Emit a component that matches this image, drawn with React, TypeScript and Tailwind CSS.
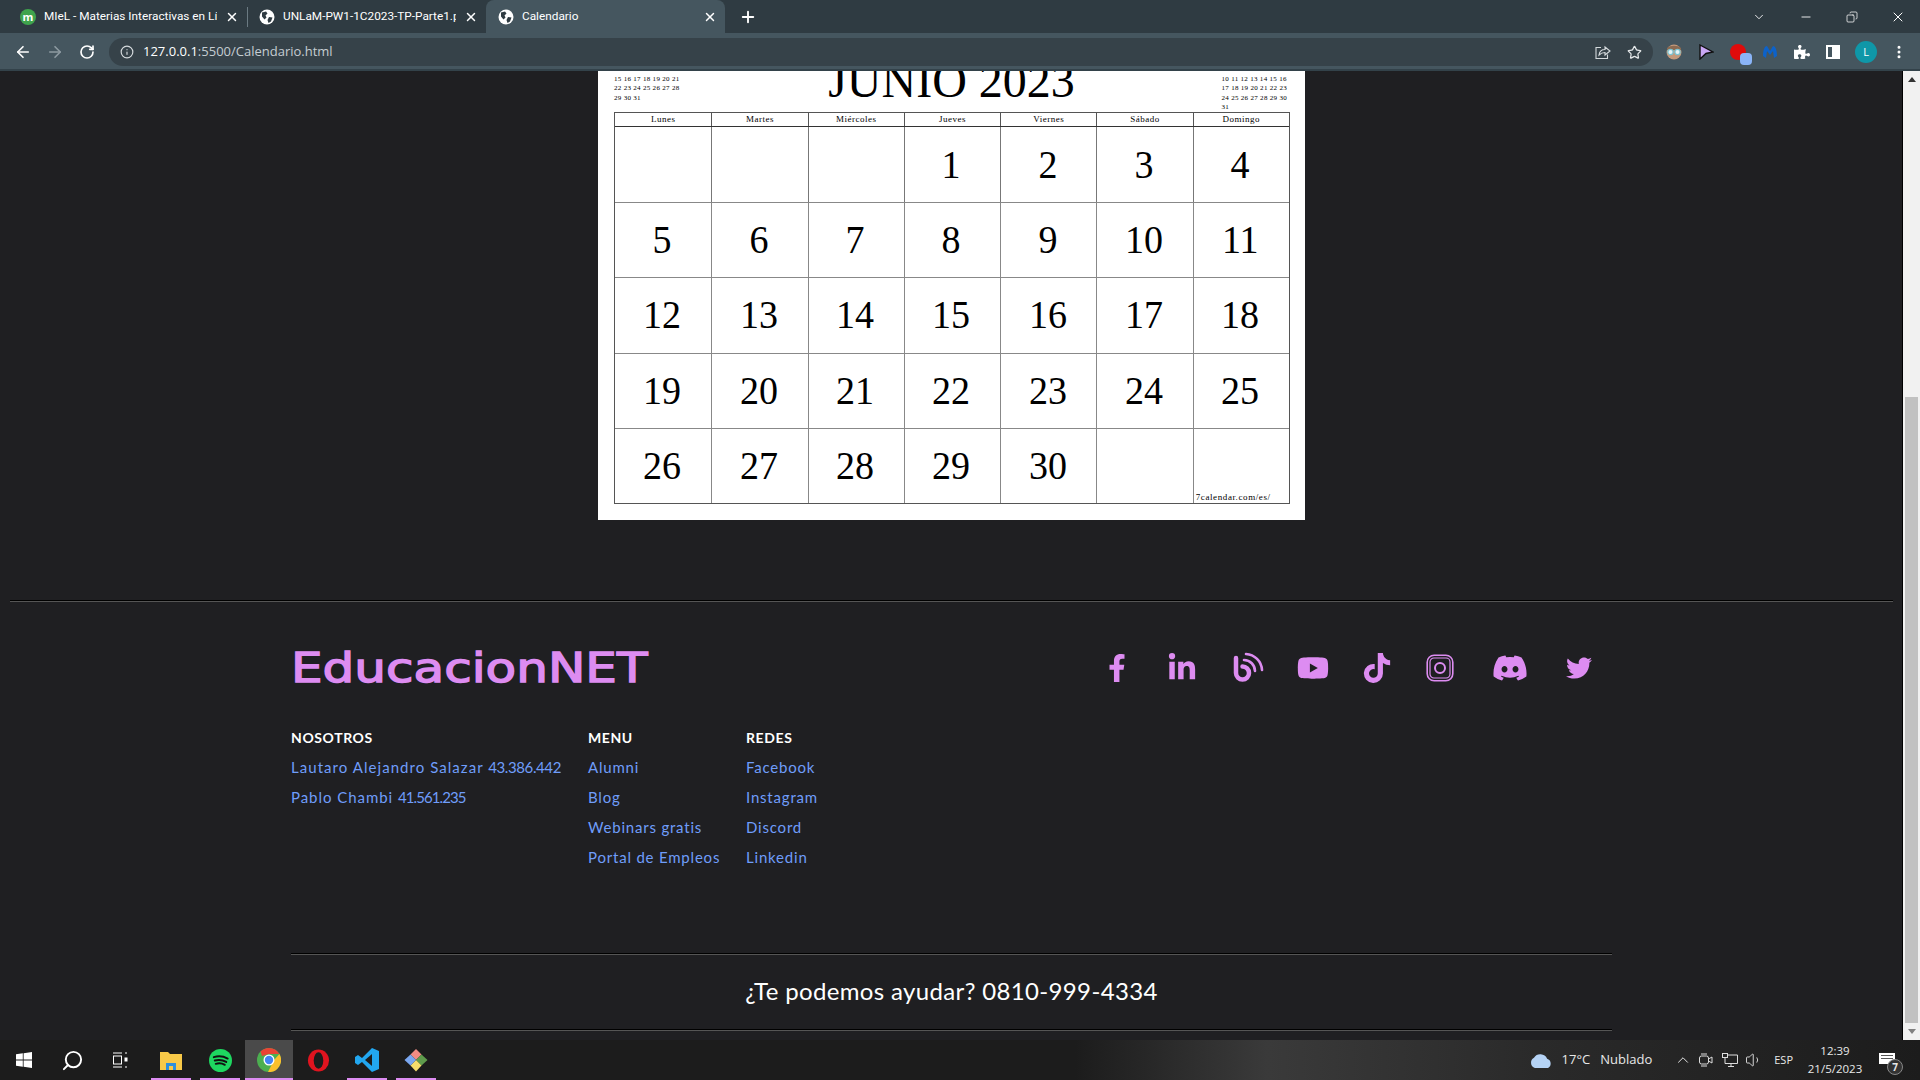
import { useMemo, type ReactNode } from 'react';
import { ArrowLeft, ArrowRight, ChevronDown, ChevronUp, Copy, Info, Minus, MoreVertical, Plus, RotateCw, Search, Star, Volume1, X } from 'lucide-react';
import { FaDiscord, FaFacebookF, FaLinkedinIn, FaPuzzlePiece, FaTiktok, FaTwitter, FaYoutube } from 'react-icons/fa';

function Globe() {
  return (
    <svg viewBox="0 0 16 16" className="w-4 h-4 shrink-0">
      <circle cx="8" cy="8" r="7.5" fill="#fff" />
      <path d="M3 3.5 L7 2.5 L8.5 4.5 L6.5 6.5 L7.5 8.5 L5.5 10.5 L3 7.5 Z M10 8 L13.5 8.5 L12 12.5 L9.5 14 L8.5 11 Z" fill="#2f3b42" />
    </svg>
  );
}

function Tab({ icon, title, active, className }: { icon: ReactNode; title: string; active?: boolean; className: string }) {
  return (
    <div className={`relative h-full flex items-center pr-[8px] gap-[8px] ${className} ${active ? 'bg-[#45565f] rounded-t-lg' : ''}`}>
      {icon}
      <span className="flex-1 whitespace-nowrap overflow-hidden font-['Roboto',sans-serif] text-[11.8px] text-white">{title}</span>
      <X className="w-3.5 h-3.5 text-white shrink-0" strokeWidth={2.5} />
    </div>
  );
}

function ChromeBar() {
  return (
    <div className="shrink-0 font-['Open_Sans',sans-serif]">
      <div className="h-[33px] bg-[#2f3b42] flex items-end">
        <div className="flex h-[33px] items-center">
          <Tab
            className="w-[247px] pl-[20px]"
            title="MIeL - Materias Interactivas en Lí"
            icon={
              <span className="w-4 h-4 rounded-full bg-[#3fa34d] text-white text-[11px] font-bold leading-4 text-center shrink-0">m</span>
            }
          />
          <div className="w-px h-5 bg-[#6b7a82]" />
          <Tab className="w-[238px] pl-[11px]" title="UNLaM-PW1-1C2023-TP-Parte1.p" icon={<Globe />} />
          <Tab className="w-[239px] pl-[12px]" title="Calendario" icon={<Globe />} active />
          <Plus className="w-[18px] h-[18px] text-white ml-[14px]" strokeWidth={2.5} />
        </div>
        <div className="flex-1" />
        <div className="flex items-center h-full text-white pr-[14px]">
          <ChevronDown className="w-[14px] h-[14px]" strokeWidth={1.5} />
          <Minus className="w-[14px] h-[14px] ml-[33px]" strokeWidth={1.5} />
          <Copy className="w-[12px] h-[12px] ml-[33px] -scale-x-100" strokeWidth={1.5} />
          <X className="w-[16px] h-[16px] ml-[32px]" strokeWidth={1.5} />
        </div>
      </div>
      <div className="h-[38px] pt-[2px] bg-[#45565f] border-b-2 border-[#33424a] flex items-center pl-[14px]">
        <ArrowLeft className="w-[18px] h-[18px] text-white" strokeWidth={2.2} />
        <ArrowRight className="w-[18px] h-[18px] text-[#8d9aa1] ml-[14px]" strokeWidth={2.2} />
        <RotateCw className="w-[16px] h-[16px] text-white ml-[15px]" strokeWidth={2.5} />
        <div className="ml-[14px] w-[1544px] h-[28px] rounded-full bg-[#364249] flex items-center pl-[11px] pr-[10px]">
          <Info className="w-[14px] h-[14px] text-[#d5dadd]" />
          <span className="ml-[9px] text-[13px] text-[#c5cdd2]"><span className="text-white">127.0.0.1</span>:5500/Calendario.html</span>
          <div className="flex-1" />
          <svg viewBox="0 0 16 16" className="w-[16px] h-[16px]" fill="none" stroke="#d5dadd" strokeWidth="1.1">
            <path d="M6 3.5 H1 V14.5 H12.5 V10.5" />
            <path d="M4 11 C4.5 7.5 7 5.5 10 5.5 V3 L15 7 L10 11 V8.5 C7.5 8.5 5.5 9.5 4 11 Z" />
          </svg>
          <Star className="w-[15px] h-[15px] text-[#e5e8ea] ml-[16px] mr-[1px]" />
        </div>
        <div className="flex items-center gap-[16px] ml-[13px]">
          <svg viewBox="0 0 16 16" className="w-4 h-4">
            <circle cx="8" cy="8" r="7.5" fill="#c49a7c" />
            <path d="M1 4 C4 1 12 1 15 4 L15 6 H1 Z" fill="#8a6a52" />
            <circle cx="4.5" cy="8" r="2.6" fill="#e8f4f6" stroke="#7cc4d2" strokeWidth="1.2" />
            <circle cx="11.5" cy="8" r="2.6" fill="#e8f4f6" stroke="#7cc4d2" strokeWidth="1.2" />
          </svg>
          <svg viewBox="0 0 16 16" className="w-4 h-4"><path d="M2 1 L15 8 L8 9.5 L2 15 Z" fill="#c9a8f5" stroke="#111" strokeWidth="1.4" /></svg>
          <span className="relative w-4 h-4 rounded-full bg-[#e00b0b]">
            <span className="absolute left-[10px] top-[9px] w-[12px] h-[12px] rounded-sm bg-[#8ab4f8]" />
          </span>
          <svg viewBox="0 0 16 16" className="w-4 h-4"><path d="M1 12 C1 5 3 2 5 2 L8 7 L11 2 C13 2 15 5 15 12 L12 14 L11 7 L8 11 L5 7 L4 14 Z" fill="#0d62c9" /></svg>
          <FaPuzzlePiece className="w-4 h-4 text-white" />
          <div className="w-[14px] h-[14px] border-2 border-white flex justify-end"><div className="w-[6px] h-full bg-white" /></div>
          <span className="w-[22px] h-[22px] -ml-[1px] -mr-[2px] rounded-full bg-[#0f97a8] text-white text-[11px] text-center leading-[22px]">L</span>
          <MoreVertical className="w-4 h-4 text-white" strokeWidth={2.5} />
        </div>
      </div>
    </div>
  );
}

const WEEKDAYS = ['Lunes', 'Martes', 'Miércoles', 'Jueves', 'Viernes', 'Sábado', 'Domingo'];

function MiniMonth({ rows, className }: { rows: string[]; className: string }) {
  return (
    <div className={`text-[7px] leading-[9.5px] tracking-[0.3px] text-black whitespace-pre -mt-[6px] ${className}`}>
      {rows.map((r) => (
        <div key={r}>{r}</div>
      ))}
    </div>
  );
}

function Calendar() {
  const cells = useMemo(() => {
    const out: (number | null)[] = [null, null, null];
    for (let d = 1; d <= 30; d++) out.push(d);
    out.push(null, null);
    return out;
  }, []);

  return (
    <div className="w-[707px] h-[449px] bg-white shrink-0 mx-auto px-[16px] font-['Liberation_Serif',serif] text-black overflow-hidden">
      <div className="h-[41px] grid grid-cols-[1fr_auto_1fr]">
        <MiniMonth className="justify-self-start" rows={['8 9 10 11 12 13 14', '15 16 17 18 19 20 21', '22 23 24 25 26 27 28', '29 30 31']} />
        <div className="text-[48px] leading-[48px] -mt-[14px] whitespace-nowrap">JUNIO 2023</div>
        <MiniMonth className="justify-self-end pr-[2px]" rows={['3 4 5 6 7 8 9', '10 11 12 13 14 15 16', '17 18 19 20 21 22 23', '24 25 26 27 28 29 30', '31']} />
      </div>
      <div className="w-[676px] border border-[#555]">
        <div className="grid grid-cols-7 h-[14px] border-b border-[#333]">
          {WEEKDAYS.map((d, i) => (
            <div key={d} className={`text-[9px] leading-[13px] text-center tracking-[0.5px] ${i > 0 ? 'border-l border-[#555]' : ''}`}>{d}</div>
          ))}
        </div>
        <div className="grid grid-cols-7 auto-rows-[75.2px]">
          {cells.map((c, i) => (
            <div
              key={i}
              className={`relative flex items-center justify-center pr-[2px] text-[40px] ${i % 7 ? 'border-l border-[#777]' : ''} ${i > 6 ? 'border-t border-[#888]' : ''}`}
            >
              <span className="inline-block scale-x-95">{c}</span>
              {i === 34 && <span className="absolute left-[2px] bottom-0 text-[9px] tracking-[0.6px] leading-[12px]">7calendar.com/es/</span>}
            </div>
          ))}
        </div>
      </div>
    </div>
  );
}

function Socials() {
  return (
    <div className="flex items-center text-[#dd8cf1]">
      <FaFacebookF className="w-[28px] h-[28px]" />
      <FaLinkedinIn className="w-[30px] h-[30px] ml-[36px]" />
      <svg viewBox="0 0 32 32" className="w-[32px] h-[32px] ml-[35px]" fill="none" stroke="currentColor" strokeLinecap="round">
        <path d="M4 6 V21 A6.5 6.5 0 1 0 10.5 14.5" strokeWidth="4.5" />
        <path d="M12 8 A11 11 0 0 1 23 19" strokeWidth="2.6" />
        <path d="M14 2 A17 17 0 0 1 30 18" strokeWidth="2.6" />
      </svg>
      <FaYoutube className="w-[32px] h-[32px] ml-[33px]" />
      <FaTiktok className="w-[30px] h-[30px] ml-[33px]" />
      <svg viewBox="0 0 28 28" className="w-[28px] h-[28px] ml-[34px]" fill="none" stroke="currentColor">
        <rect x="1.2" y="1.2" width="25.6" height="25.6" rx="7" strokeWidth="1.6" />
        <rect x="4" y="4" width="20" height="20" rx="4" strokeWidth="1.2" />
        <circle cx="14" cy="14" r="5" strokeWidth="2" />
      </svg>
      <FaDiscord className="w-[36px] h-[36px] ml-[38px]" />
      <FaTwitter className="w-[26px] h-[26px] ml-[38px] mr-[1px]" />
    </div>
  );
}

function LinkColumn({ title, links, className }: { title: string; links: ReactNode[]; className: string }) {
  return (
    <div className={className}>
      <h4 className="text-[14px] leading-[30px] tracking-[0.6px] font-bold text-white">{title}</h4>
      <ul className="-mt-[1px]">
        {links.map((l, i) => (
          <li key={i} className="text-[15px] leading-[30px] text-[#6f9dfa] whitespace-nowrap tracking-[0.8px]">{l}</li>
        ))}
      </ul>
    </div>
  );
}

const DIVIDER = 'border-[#555] shadow-[0_-1px_0_#000]';

function Footer() {
  return (
    <footer className={`mt-[81px] mx-[10px] border-t ${DIVIDER} font-['Lato',sans-serif]`}>
      <div className="w-[1321px] mx-auto">
        <div className="flex items-center justify-between pt-[11px] h-[121px] pr-[19px]">
          <span className="inline-block origin-left scale-x-[1.22] font-['DejaVu_Sans',sans-serif] text-[41px] leading-[41px] text-[#dd8cf1] [-webkit-text-stroke:1.4px_#dd8cf1]">EducacionNET</span>
          <Socials />
        </div>
        <div className="flex h-[231px]">
          <LinkColumn
            className="w-[297px]"
            title="NOSOTROS"
            links={[
              <>
                <span className="tracking-[1.05px]">Lautaro Alejandro Salazar </span>
                <span className="tracking-[-0.4px]">43.386.442</span>
              </>,
              <>
                <span className="tracking-[0.95px]">Pablo Chambi </span>
                <span className="tracking-[-0.9px]">41.561.235</span>
              </>,
            ]}
          />
          <LinkColumn className="w-[158px]" title="MENU" links={['Alumni', 'Blog', 'Webinars gratis', 'Portal de Empleos']} />
          <LinkColumn className="w-[150px]" title="REDES" links={['Facebook', 'Instagram', 'Discord', 'Linkedin']} />
        </div>
        <div className="relative h-[77px] flex items-center justify-center pb-[3px] text-[24px] text-white tracking-[0.35px]">
          <div className={`absolute inset-x-0 top-0 border-t ${DIVIDER}`} />
          ¿Te podemos ayudar? 0810-999-4334
          <div className={`absolute inset-x-0 bottom-0 border-t ${DIVIDER}`} />
        </div>
      </div>
    </footer>
  );
}

function Scrollbar() {
  return (
    <div className="w-[17px] shrink-0 bg-[#f1f1f1] shadow-[-1px_0_0_#000] flex flex-col items-center">
      <div className="h-[17px] flex items-center"><div className="w-0 h-0 border-x-[4px] border-x-transparent border-b-[5px] border-b-[#333]" /></div>
      <div className="w-full h-[309px]" />
      <div className="w-[13px] flex-1 bg-[#c1c1c1]" />
      <div className="h-[17px] flex items-center"><div className="w-0 h-0 border-x-[4px] border-x-transparent border-t-[5px] border-t-[#808080]" /></div>
    </div>
  );
}

function TaskIcon({ w, underline, active, children }: { w: string; underline?: boolean; active?: boolean; children: ReactNode }) {
  return (
    <div className={`relative flex items-center justify-center ${w} ${active ? 'bg-[#4a4a4a]' : ''}`}>
      {children}
      {underline && <span className="absolute bottom-0 inset-x-0 h-[2px] bg-[#dd8cf1]" />}
    </div>
  );
}

function Taskbar() {
  return (
    <div className="h-[40px] shrink-0 flex items-stretch text-white bg-[linear-gradient(90deg,#1c1c1c_0%,#1c1c1c_56%,#3a3a3a_66%,#2a2a2a_80%,#1c1c1c_100%)] font-['Open_Sans',sans-serif]">
      <div className="w-[48px] flex items-center justify-center">
        <svg viewBox="0 0 16 16" className="w-4 h-4" fill="#fff"><path d="M0 2.3 L6.8 1.3 V7.6 H0 Z M7.6 1.2 L16 0 V7.6 H7.6 Z M0 8.4 H6.8 V14.7 L0 13.7 Z M7.6 8.4 H16 V16 L7.6 14.8 Z" /></svg>
      </div>
      <div className="w-[48px] flex items-center justify-center"><Search className="w-[23px] h-[23px] -scale-x-100" strokeWidth={2} /></div>
      <div className="w-[48px] flex items-center justify-center">
        <svg viewBox="0 0 16 16" className="w-4 h-4" fill="none" stroke="#fff"><path d="M1 1 H10 M1 15 H10" /><rect x="1.5" y="4" width="8" height="8" /><path d="M13 1 H15 M13 15 H15" /><rect x="13" y="6" width="2" height="3" fill="#fff" /></svg>
      </div>
      <div className="w-[7px]" />
      <TaskIcon w="w-[40px]" underline>
        <svg viewBox="0 0 22 20" className="w-[22px] h-[20px]"><path d="M0 2 H8 L10 4 H22 V20 H0 Z" fill="#f8c948" /><rect x="6" y="13" width="10" height="7" fill="#2d8fdc" /><rect x="9" y="16" width="4" height="4" fill="#f8c948" /></svg>
      </TaskIcon>
      <div className="w-[9px]" />
      <TaskIcon w="w-[40px]" underline>
        <svg viewBox="0 0 24 24" className="w-[23px] h-[23px]"><circle cx="12" cy="12" r="12" fill="#1ed760" /><path d="M5 8.5 C10 7 15 7.5 19.5 10 M6 12 C10 11 14.5 11.5 18 13.5 M7 15.5 C10.5 14.5 14 15 16.5 16.5" stroke="#111" strokeWidth="2" fill="none" strokeLinecap="round" /></svg>
      </TaskIcon>
      <div className="w-[5px]" />
      <TaskIcon w="w-[48px]" underline active>
        <svg viewBox="0 0 24 24" className="w-[24px] h-[24px]">
          <circle cx="12" cy="12" r="12" fill="#4caf50" />
          <path d="M12 0 A12 12 0 0 1 22.4 6 L12 6 L5 8 L3.5 3.5 A12 12 0 0 1 12 0 Z" fill="#ea4335" />
          <path d="M22.4 6 A12 12 0 0 1 11 24 L17 12 Z" fill="#fbc02d" />
          <circle cx="12" cy="12" r="5.5" fill="#fff" />
          <circle cx="12" cy="12" r="4.2" fill="#4285f4" />
        </svg>
      </TaskIcon>
      <div className="w-[50px] flex items-center justify-center">
        <svg viewBox="0 0 24 24" className="w-[23px] h-[23px]"><ellipse cx="12" cy="12" rx="11" ry="11.5" fill="#e0141f" /><ellipse cx="12" cy="12" rx="5" ry="8.5" fill="#1c1c1c" /></svg>
      </div>
      <div className="w-[4px]" />
      <TaskIcon w="w-[40px]" underline>
        <svg viewBox="0 0 24 24" className="w-[24px] h-[24px]"><path d="M17 0 L24 3 V21 L17 24 L7 14 L3 17 L0 15 V9 L3 7 L7 10 Z" fill="#22a7f0" /><path d="M17 6 L10 12 L17 18 Z" fill="#1c1c1c" /></svg>
      </TaskIcon>
      <div className="w-[9px]" />
      <TaskIcon w="w-[40px]" underline>
        <svg viewBox="0 0 24 24" className="w-[24px] h-[24px]"><path d="M12 12 L6.5 6.5 L12 1 L17.5 6.5 Z" fill="#f28b82" /><path d="M12 12 L17.5 6.5 L23.5 12 L17.5 17.5 Z" fill="#5f9b4c" /><path d="M12 12 L17.5 17.5 L12 23.5 L6.5 17.5 Z" fill="#f5dc6b" /><path d="M12 12 L6.5 17.5 L0.5 12 L6.5 6.5 Z" fill="#7aa7f0" /></svg>
      </TaskIcon>
      <div className="flex-1" />
      <div className="flex items-center text-[13px] text-[#e8e8e8]">
        <svg viewBox="0 0 26 16" className="w-[25px] h-[15px]"><path d="M6 16 A6 6 0 0 1 5 5 A8 8 0 0 1 19 6 A5.5 5.5 0 0 1 20 16 Z" fill="#b5d3f5" /></svg>
        <span className="ml-[8px]">17°C</span>
        <span className="ml-[10px]">Nublado</span>
        <ChevronUp className="w-[18px] h-[18px] ml-[22px]" strokeWidth={1.3} />
        <svg viewBox="0 0 16 16" className="w-[16px] h-[16px] ml-[6px]" fill="none" stroke="#ddd"><rect x="1.5" y="4" width="9" height="8" rx="2" /><path d="M10.5 7 L14 5 V11 L10.5 9 M3 2 H9 M3 14 H9" /></svg>
        <svg viewBox="0 0 18 16" className="w-[18px] h-[16px] ml-[7px]" fill="none" stroke="#ddd"><rect x="1.5" y="1.5" width="5" height="4" /><path d="M7 3 H16.5 V11.5 H4 V6 M10 11.5 V14.5 M7 14.5 H13" /></svg>
        <Volume1 className="w-[18px] h-[18px] ml-[6px]" strokeWidth={1.2} />
        <span className="ml-[11px] text-[11px]">ESP</span>
        <div className="w-[70px] ml-[7px] text-center text-[11.5px] leading-[18px]">
          <div>12:39</div>
          <div>21/5/2023</div>
        </div>
        <div className="relative w-[50px] h-full">
          <div className="absolute left-[9px] top-[13px] w-[16px] h-[11px] bg-white flex flex-col gap-[2px] p-[2px]">
            <div className="h-px bg-[#555]" />
            <div className="h-px bg-[#555]" />
          </div>
          <span className="absolute left-[17px] top-[19px] w-[16px] h-[16px] rounded-full bg-[#333] border border-[#888] text-[10px] leading-[14px] text-center font-bold">7</span>
        </div>
      </div>
    </div>
  );
}

export default function App() {
  return (
    <div className="h-screen flex flex-col overflow-hidden bg-[#1f1f22]">
      <ChromeBar />
      <div className="flex-1 min-h-0 flex overflow-hidden">
        <main className="flex-1 min-w-0 overflow-hidden">
          <Calendar />
          <Footer />
        </main>
        <Scrollbar />
      </div>
      <Taskbar />
    </div>
  );
}
